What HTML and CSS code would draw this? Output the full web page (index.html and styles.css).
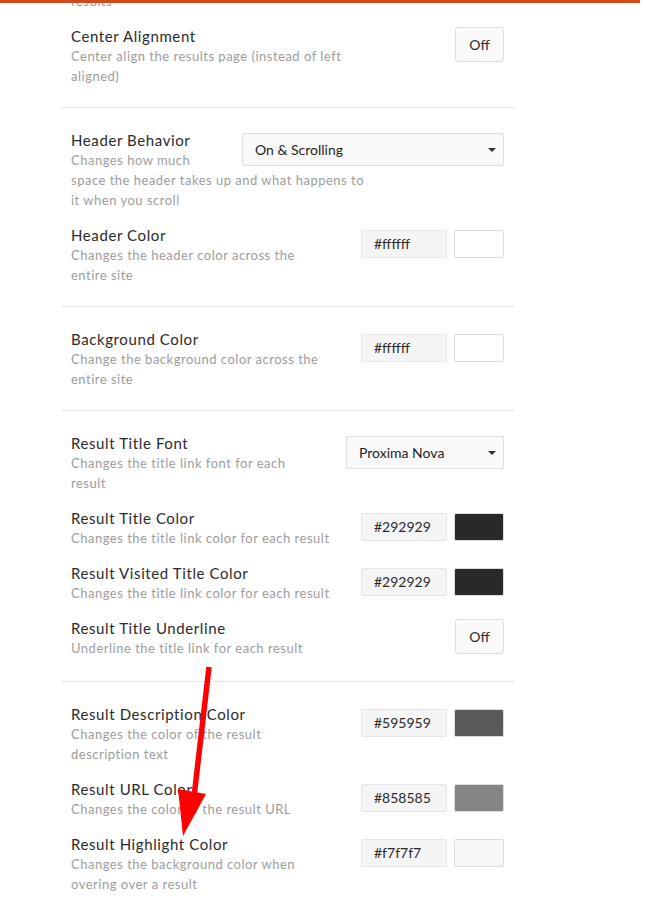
FILE: index.html
```html
<!DOCTYPE html>
<html lang="en">
<head>
<meta charset="utf-8">
<title>Settings</title>
<link rel="stylesheet" href="styles.css">
</head>
<body>
<div class="topbar"></div>
<main class="panel">
  <section class="group first">
    <p class="desc tail">results</p>
    <div class="row">
      <div class="text">
        <h3 class="label">Center Alignment</h3>
        <p class="desc">Center align the results page (instead of left<br>aligned)</p>
      </div>
      <button class="toggle">Off</button>
    </div>
  </section>

  <section class="group">
    <div class="row float-row">
      <div class="select wide">On &amp; Scrolling<span class="caret"></span></div>
      <div class="text">
        <h3 class="label">Header Behavior</h3>
        <p class="desc">Changes how much<br>space the header takes up and what happens to<br>it when you scroll</p>
      </div>
    </div>
    <div class="row">
      <div class="text">
        <h3 class="label">Header Color</h3>
        <p class="desc">Changes the header color across the<br>entire site</p>
      </div>
      <div class="color"><span class="hex">#ffffff</span><span class="swatch" style="background:#ffffff"></span></div>
    </div>
  </section>

  <section class="group">
    <div class="row">
      <div class="text">
        <h3 class="label">Background Color</h3>
        <p class="desc">Change the background color across the<br>entire site</p>
      </div>
      <div class="color"><span class="hex">#ffffff</span><span class="swatch" style="background:#ffffff"></span></div>
    </div>
  </section>

  <section class="group roomy">
    <div class="row">
      <div class="text">
        <h3 class="label">Result Title Font</h3>
        <p class="desc">Changes the title link font for each<br>result</p>
      </div>
      <div class="select narrow">Proxima Nova<span class="caret"></span></div>
    </div>
    <div class="row">
      <div class="text">
        <h3 class="label">Result Title Color</h3>
        <p class="desc">Changes the title link color for each result</p>
      </div>
      <div class="color"><span class="hex">#292929</span><span class="swatch" style="background:#292929"></span></div>
    </div>
    <div class="row">
      <div class="text">
        <h3 class="label">Result Visited Title Color</h3>
        <p class="desc">Changes the title link color for each result</p>
      </div>
      <div class="color"><span class="hex">#292929</span><span class="swatch" style="background:#292929"></span></div>
    </div>
    <div class="row">
      <div class="text">
        <h3 class="label">Result Title Underline</h3>
        <p class="desc">Underline the title link for each result</p>
      </div>
      <button class="toggle">Off</button>
    </div>
  </section>

  <section class="group">
    <div class="row">
      <div class="text">
        <h3 class="label">Result Description Color</h3>
        <p class="desc">Changes the color of the result<br>description text</p>
      </div>
      <div class="color"><span class="hex">#595959</span><span class="swatch" style="background:#595959"></span></div>
    </div>
    <div class="row">
      <div class="text">
        <h3 class="label">Result URL Color</h3>
        <p class="desc">Changes the color of the result URL</p>
      </div>
      <div class="color"><span class="hex">#858585</span><span class="swatch" style="background:#858585"></span></div>
    </div>
    <div class="row">
      <div class="text">
        <h3 class="label">Result Highlight Color</h3>
        <p class="desc">Changes the background color when<br>overing over a result</p>
      </div>
      <div class="color"><span class="hex">#f7f7f7</span><span class="swatch" style="background:#f7f7f7"></span></div>
    </div>
  </section>
</main>

<svg class="arrow" width="60" height="180" viewBox="0 0 60 180">
  <line x1="49" y1="2" x2="34" y2="132" stroke="#ff0000" stroke-width="5.5"/>
  <polygon points="18,124 46,129 23,171" fill="#ff0000"/>
</svg>
</body>
</html>
```

FILE: styles.css
```css
* { box-sizing: border-box; }

html, body {
  margin: 0;
  padding: 0;
  background: #ffffff;
}

body {
  font-family: Lato, "Liberation Sans", sans-serif;
  color: #2b2b2b;
  overflow: hidden;
}

.topbar {
  position: fixed;
  top: 0;
  left: 0;
  width: 640px;
  height: 3px;
  background: #d04b1f;
  z-index: 5;
}

.panel {
  width: 454px;
  margin-left: 61px;
}

.group {
  padding: 22px 11px 21px 10px;
  border-top: 1px solid #e6e6e6;
  display: flex;
  flex-direction: column;
  gap: 15px;
}

.group.first {
  border-top: 0;
  padding-top: 0;
  margin-top: -9px;
}

.group.roomy {
  padding-bottom: 23px;
}

.row {
  display: flex;
  justify-content: space-between;
  align-items: flex-start;
}

.float-row {
  display: flow-root;
}

.label {
  margin: 0;
  font-size: 15px;
  line-height: 20px;
  font-weight: 400;
  letter-spacing: 0.6px;
  color: #2b2b2b;
  white-space: nowrap;
}

.desc {
  margin: 0;
  font-size: 13px;
  line-height: 20px;
  letter-spacing: 0.5px;
  color: #9d9d9d;
  white-space: nowrap;
}

.toggle {
  width: 49px;
  height: 35px;
  margin-top: 1px;
  padding: 0;
  border: 1px solid #dedede;
  border-radius: 3px;
  background: #f9f9f9;
  font-family: inherit;
  font-size: 14px;
  color: #2b2b2b;
}

.select {
  position: relative;
  height: 33px;
  margin-top: 3px;
  padding: 0 12px;
  border: 1px solid #dedede;
  border-radius: 2px;
  background: #f9f9f9;
  font-size: 14px;
  line-height: 31px;
  color: #1f1f1f;
}

.select.wide {
  float: right;
  width: 262px;
  margin-left: 8px;
}

.select.narrow {
  width: 158px;
}

.caret {
  position: absolute;
  right: 7px;
  top: 14px;
  width: 0;
  height: 0;
  border-left: 4px solid transparent;
  border-right: 4px solid transparent;
  border-top: 4px solid #333333;
}

.color {
  display: flex;
  gap: 7px;
  margin-top: 5px;
}

.hex {
  width: 86px;
  height: 28px;
  padding-left: 12px;
  border: 1px solid #e6e6e6;
  border-radius: 2px;
  background: #f5f5f5;
  font-size: 14px;
  line-height: 26px;
  color: #2b2b2b;
}

.swatch {
  width: 50px;
  height: 28px;
  border: 1px solid #dcdcdc;
  border-radius: 2px;
}

.arrow {
  position: absolute;
  left: 160px;
  top: 665px;
}
```
